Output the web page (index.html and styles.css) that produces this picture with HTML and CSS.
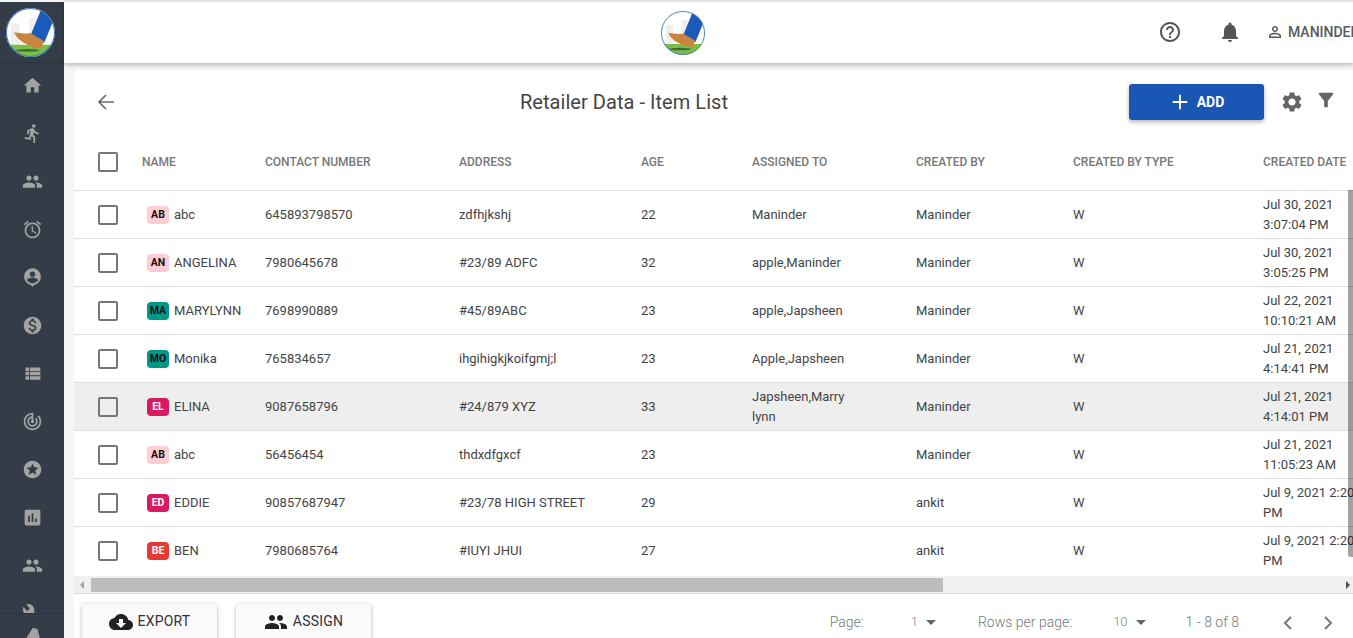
FILE: index.html
```html
<!DOCTYPE html>
<html lang="en">
<head>
<meta charset="utf-8">
<title>Retailer Data - Item List</title>
<link rel="stylesheet" href="styles.css">
</head>
<body>
<svg class="defs" width="0" height="0" aria-hidden="true">
  <defs>
    <clipPath id="logoclip"><circle cx="24" cy="24" r="24"/></clipPath>
    <symbol id="logo" viewBox="0 0 48 48">
      <g clip-path="url(#logoclip)">
        <rect width="48" height="48" fill="#fff"/>
        <rect x="5" y="15" width="8" height="21" fill="#efefef"/>
        <rect x="23" y="10" width="7" height="26" fill="#efefef"/>
        <rect x="0" y="36" width="48" height="12" fill="#7cbd4a"/>
        <ellipse cx="21" cy="41.500" rx="12" ry="1.300" fill="#3f6b2c"/>
        <path d="M35 0 L49 6 L37.500 34 L24 27 Z" fill="#1a5ab8"/>
        <path d="M8 24 C12 23.500 18 26 24 24.500 L37.500 32.500 L34 39.500 C24 38.500 11.500 33 8 24 Z" fill="#c9853f"/>
      </g>
      <circle cx="24" cy="24" r="23.500" fill="none" stroke="#3f77c4" stroke-width="1"/>
    </symbol>
    <symbol id="i-people" viewBox="0 0 24 24"><path d="M16 11c1.660 0 2.990-1.340 2.990-3S17.660 5 16 5c-1.660 0-3 1.340-3 3s1.340 3 3 3zm-8 0c1.660 0 2.990-1.340 2.990-3S9.660 5 8 5C6.340 5 5 6.340 5 8s1.340 3 3 3zm0 2c-2.330 0-7 1.170-7 3.500V19h14v-2.500c0-2.330-4.670-3.500-7-3.500zm8 0c-.290 0-.620.020-.970.050 1.160.840 1.970 1.970 1.970 3.450V19h6v-2.500c0-2.330-4.670-3.500-7-3.500z"/></symbol>
  </defs>
</svg>
<div class="app">
  <aside class="sidebar">
    <div class="side-logo"><svg class="logo-big"><use href="#logo"/></svg></div>
    <nav class="side-nav">
      <a class="side-item"><svg viewBox="0 0 24 24"><path d="M10 20v-6h4v6h5v-8h3L12 3 2 12h3v8z"/></svg></a>
      <a class="side-item"><svg viewBox="0 0 24 24"><path d="M13.490 5.480c1.100 0 2-.9 2-2s-.9-2-2-2-2 .9-2 2 .9 2 2 2zm-3.600 13.900l1-4.400 2.100 2v6h2v-7.500l-2.100-2 .6-3c1.300 1.500 3.300 2.500 5.500 2.500v-2c-1.900 0-3.500-1-4.300-2.400l-1-1.600c-.4-.6-1-1-1.700-1-.3 0-.5.1-.8.1l-5.200 2.200v4.700h2v-3.400l1.800-.7-1.600 8.100-4.900-1-.4 2 7 1.400z"/></svg></a>
      <a class="side-item"><svg viewBox="0 0 24 24"><use href="#i-people"/></svg></a>
      <a class="side-item"><svg viewBox="0 0 24 24"><path d="M22 5.720l-4.600-3.860-1.290 1.530 4.600 3.860L22 5.720zM7.880 3.390L6.600 1.860 2 5.710l1.290 1.530 4.590-3.850zM12.500 8H11v6l4.750 2.850.75-1.230-4-2.370V8zM12 4c-4.970 0-9 4.030-9 9s4.030 9 9 9 9-4.030 9-9-4.030-9-9-9zm0 16c-3.870 0-7-3.130-7-7s3.130-7 7-7 7 3.130 7 7-3.130 7-7 7z"/></svg></a>
      <a class="side-item"><svg viewBox="0 0 24 24"><path d="M12 1.500C6.750 1.500 2.500 5.750 2.500 11c0 4.500 3.100 8.250 7.300 9.250L12 22.500l2.200-2.250c4.200-1 7.300-4.750 7.300-9.250 0-5.250-4.250-9.500-9.500-9.500zm0 3.500c1.800 0 3.200 1.400 3.200 3.200s-1.400 3.200-3.200 3.200-3.200-1.400-3.200-3.200S10.200 5 12 5zm0 13.500c-2.600 0-4.900-1.300-6.300-3.300.03-2.100 4.200-3.200 6.300-3.200s6.270 1.100 6.300 3.200c-1.400 2-3.700 3.300-6.300 3.300z"/></svg></a>
      <a class="side-item"><svg viewBox="0 0 24 24"><path d="M12 2C6.480 2 2 6.480 2 12s4.480 10 10 10 10-4.480 10-10S17.520 2 12 2zm1.410 16.090V20h-2.670v-1.930c-1.710-.36-3.160-1.460-3.270-3.400h1.960c.1 1.050.82 1.870 2.650 1.870 1.960 0 2.400-.98 2.400-1.590 0-.83-.44-1.610-2.670-2.140-2.480-.6-4.180-1.620-4.180-3.670 0-1.720 1.390-2.840 3.110-3.210V4h2.670v1.950c1.860.45 2.790 1.860 2.850 3.390H14.300c-.05-1.110-.64-1.870-2.220-1.870-1.500 0-2.400.68-2.400 1.640 0 .84.65 1.390 2.670 1.910s4.180 1.390 4.180 3.910c-.01 1.830-1.380 2.830-3.120 3.160z"/></svg></a>
      <a class="side-item"><svg viewBox="0 0 24 24"><path d="M4 14h4v-4H4v4zm0 5h4v-4H4v4zM4 9h4V5H4v4zm5 5h12v-4H9v4zm0 5h12v-4H9v4zM9 5v4h12V5H9z"/></svg></a>
      <a class="side-item"><svg viewBox="0 0 24 24"><path d="M19.070 4.930l-1.410 1.410C19.100 7.790 20 9.790 20 12c0 4.420-3.580 8-8 8s-8-3.580-8-8c0-4.080 3.050-7.440 7-7.930v2.020C8.160 6.570 6 9.030 6 12c0 3.310 2.690 6 6 6s6-2.690 6-6c0-1.660-.67-3.160-1.760-4.240l-1.410 1.410C15.550 9.900 16 10.900 16 12c0 2.210-1.790 4-4 4s-4-1.790-4-4c0-1.860 1.280-3.410 3-3.860v2.140c-.6.35-1 .98-1 1.720 0 1.100.9 2 2 2s2-.9 2-2c0-.74-.4-1.380-1-1.720V2h-1C6.480 2 2 6.480 2 12s4.480 10 10 10 10-4.480 10-10c0-2.760-1.120-5.260-2.930-7.070z"/></svg></a>
      <a class="side-item"><svg viewBox="0 0 24 24"><path d="M11.990 2C6.470 2 2 6.480 2 12s4.470 10 9.990 10C17.520 22 22 17.520 22 12S17.520 2 11.990 2zm4.240 16L12 15.450 7.770 18l1.120-4.810-3.730-3.230 4.920-.42L12 5l1.920 4.530 4.920.42-3.730 3.230L16.230 18z"/></svg></a>
      <a class="side-item"><svg viewBox="0 0 24 24"><path d="M19 3H5c-1.100 0-2 .9-2 2v14c0 1.100.9 2 2 2h14c1.100 0 2-.9 2-2V5c0-1.100-.9-2-2-2zM9 17H7v-7h2v7zm4 0h-2V7h2v10zm4 0h-2v-4h2v4z"/></svg></a>
      <a class="side-item"><svg viewBox="0 0 24 24"><use href="#i-people"/></svg></a>
      <a class="side-item"><svg viewBox="0 0 24 24"><path d="M22.700 19l-9.100-9.100c.9-2.300.4-5-1.500-6.900-2-2-5-2.400-7.400-1.300L9 6 6 9 1.600 4.700C.4 7.100.9 10.100 2.900 12.100c1.900 1.900 4.600 2.400 6.900 1.500l9.100 9.100c.4.400 1 .4 1.400 0l2.300-2.300c.5-.4.5-1.100.1-1.400z"/></svg></a>
    </nav>
    <div class="side-foot"><svg viewBox="0 0 24 24"><path d="M13 2 L18.500 3.500 L21.500 15 L5 15 Z"/></svg></div>
  </aside>
  <div class="main">
    <header class="topbar">
      <svg class="logo-small"><use href="#logo"/></svg>
      <div class="top-actions">
        <svg class="top-ic help" viewBox="0 0 24 24"><path d="M11 18h2v-2h-2v2zm1-16C6.480 2 2 6.480 2 12s4.480 10 10 10 10-4.480 10-10S17.520 2 12 2zm0 18c-4.410 0-8-3.590-8-8s3.590-8 8-8 8 3.590 8 8-3.590 8-8 8zm0-14c-2.210 0-4 1.790-4 4h2c0-1.100.9-2 2-2s2 .9 2 2c0 2-3 1.750-3 5h2c0-2.250 3-2.500 3-5 0-2.210-1.790-4-4-4z"/></svg>
        <svg class="top-ic bell" viewBox="0 0 24 24"><path d="M12 22c1.100 0 2-.9 2-2h-4c0 1.100.89 2 2 2zm6-6v-5c0-3.070-1.640-5.640-4.500-6.320V4c0-.83-.67-1.500-1.500-1.500s-1.500.67-1.500 1.500v.68C7.630 5.360 6 7.920 6 11v5l-2 2v1h16v-1l-2-2z"/></svg>
        <svg class="top-ic user" viewBox="0 0 24 24"><path d="M12 5.900c1.160 0 2.100.94 2.100 2.100s-.94 2.100-2.100 2.100S9.900 9.160 9.900 8s.94-2.100 2.100-2.100m0 9c2.970 0 6.100 1.460 6.100 2.100v1.100H5.900V17c0-.64 3.130-2.100 6.100-2.100M12 4C9.790 4 8 5.790 8 8s1.790 4 4 4 4-1.790 4-4-1.790-4-4-4zm0 9c-2.670 0-8 1.340-8 4v3h16v-3c0-2.660-5.330-4-8-4z"/></svg>
        <span class="user-name">MANINDER</span>
      </div>
    </header>
    <section class="content">
      <div class="card">
        <div class="card-head">
          <svg class="back" viewBox="0 0 24 24"><path d="M20 12H5M12 5l-7 7 7 7" fill="none" stroke="#666" stroke-width="1.600"/></svg>
          <h1 class="title">Retailer Data - Item List</h1>
          <div class="head-actions">
            <button class="btn-add"><svg viewBox="0 0 24 24"><path d="M12 4v16M4 12h16" fill="none" stroke="#fff" stroke-width="2"/></svg>ADD</button>
            <svg class="gear" viewBox="0 0 24 24"><path d="M19.140 12.940c.04-.3.06-.61.06-.94 0-.32-.02-.64-.07-.94l2.030-1.580c.18-.14.23-.41.12-.61l-1.920-3.320c-.12-.22-.37-.29-.59-.22l-2.390.96c-.5-.38-1.030-.7-1.620-.94l-.36-2.540c-.04-.24-.24-.41-.48-.41h-3.840c-.24 0-.43.17-.47.41l-.36 2.540c-.59.24-1.130.57-1.620.94l-2.390-.96c-.22-.08-.47 0-.59.22L2.740 8.870c-.12.21-.08.47.12.61l2.030 1.580c-.05.3-.09.63-.09.94s.02.64.07.94l-2.030 1.580c-.18.14-.23.41-.12.61l1.920 3.320c.12.22.37.29.59.22l2.390-.96c.5.38 1.030.7 1.620.94l.36 2.540c.05.24.24.41.48.41h3.840c.24 0 .44-.17.47-.41l.36-2.540c.59-.24 1.130-.56 1.620-.94l2.390.96c.22.08.47 0 .59-.22l1.920-3.320c.12-.22.07-.47-.12-.61l-2.010-1.580zM12 15.600c-1.980 0-3.600-1.620-3.600-3.600s1.620-3.600 3.600-3.600 3.600 1.620 3.600 3.600-1.620 3.600-3.600 3.600z"/></svg>
            <svg class="funnel" viewBox="0 0 24 24"><path d="M4.250 5.610C6.270 8.200 10 13 10 13v6c0 .55.45 1 1 1h2c.55 0 1-.45 1-1v-6s3.720-4.800 5.740-7.390c.51-.66.04-1.610-.79-1.610H5.040c-.83 0-1.300.95-.79 1.610z"/></svg>
          </div>
        </div>
        <div class="table-wrap">
          <table class="grid">
            <colgroup>
              <col class="c-check"><col class="c-name"><col class="c-contact"><col class="c-address"><col class="c-age"><col class="c-assigned"><col class="c-created"><col class="c-type"><col class="c-date">
            </colgroup>
            <thead>
              <tr>
                <th><span class="cb"></span></th><th>NAME</th><th>CONTACT NUMBER</th><th>ADDRESS</th><th>AGE</th><th>ASSIGNED TO</th><th>CREATED BY</th><th>CREATED BY TYPE</th><th>CREATED DATE</th>
              </tr>
            </thead>
            <tbody>
              <tr><td><span class="cb"></span></td><td><span class="badge pink">AB</span>abc</td><td>645893798570</td><td>zdfhjkshj</td><td>22</td><td>Maninder</td><td>Maninder</td><td>W</td><td>Jul 30, 2021 3:07:04 PM</td></tr>
              <tr><td><span class="cb"></span></td><td><span class="badge pink">AN</span>ANGELINA</td><td>7980645678</td><td>#23/89 ADFC</td><td>32</td><td>apple,Maninder</td><td>Maninder</td><td>W</td><td>Jul 30, 2021 3:05:25 PM</td></tr>
              <tr><td><span class="cb"></span></td><td><span class="badge teal">MA</span>MARYLYNN</td><td>7698990889</td><td>#45/89ABC</td><td>23</td><td>apple,Japsheen</td><td>Maninder</td><td>W</td><td>Jul 22, 2021 10:10:21 AM</td></tr>
              <tr><td><span class="cb"></span></td><td><span class="badge teal">MO</span>Monika</td><td>765834657</td><td>ihgihigkjkoifgmj;l</td><td>23</td><td>Apple,Japsheen</td><td>Maninder</td><td>W</td><td>Jul 21, 2021 4:14:41 PM</td></tr>
              <tr class="hover"><td><span class="cb"></span></td><td><span class="badge crimson">EL</span>ELINA</td><td>9087658796</td><td>#24/879 XYZ</td><td>33</td><td>Japsheen,Marry lynn</td><td>Maninder</td><td>W</td><td>Jul 21, 2021 4:14:01 PM</td></tr>
              <tr><td><span class="cb"></span></td><td><span class="badge pink">AB</span>abc</td><td>56456454</td><td>thdxdfgxcf</td><td>23</td><td></td><td>Maninder</td><td>W</td><td>Jul 21, 2021 11:05:23 AM</td></tr>
              <tr><td><span class="cb"></span></td><td><span class="badge crimson">ED</span>EDDIE</td><td>90857687947</td><td>#23/78 HIGH STREET</td><td>29</td><td></td><td>ankit</td><td>W</td><td>Jul 9, 2021 2:20:11 PM</td></tr>
              <tr><td><span class="cb"></span></td><td><span class="badge red">BE</span>BEN</td><td>7980685764</td><td>#IUYI JHUI</td><td>27</td><td></td><td>ankit</td><td>W</td><td>Jul 9, 2021 2:20:05 PM</td></tr>
            </tbody>
          </table>
          <div class="vscroll"></div>
        </div>
        <div class="hscroll">
          <span class="arrow-l"></span>
          <div class="hthumb"></div>
          <span class="arrow-r"></span>
        </div>
        <div class="card-foot">
          <div class="foot-btns">
            <button class="btn-foot"><svg viewBox="0 0 24 24"><path d="M19.350 10.040C18.670 6.590 15.640 4 12 4 9.110 4 6.600 5.640 5.350 8.040 2.340 8.360 0 10.910 0 14c0 3.310 2.690 6 6 6h13c2.760 0 5-2.240 5-5 0-2.640-2.050-4.780-4.650-4.960zM17 13l-5 5-5-5h3V9h4v4h3z"/></svg>EXPORT</button>
            <button class="btn-foot"><svg viewBox="0 0 24 24"><use href="#i-people"/></svg>ASSIGN</button>
          </div>
          <div class="pager">
            <span class="pg-label">Page:</span>
            <span class="pg-sel pg-sel-page">1<i class="caret"></i></span>
            <span class="pg-label">Rows per page:</span>
            <span class="pg-sel pg-sel-rows">10<i class="caret"></i></span>
            <span class="pg-label pg-count">1 - 8 of 8</span>
            <svg class="chev" viewBox="0 0 24 24"><path d="M15 6l-6 6 6 6" fill="none" stroke="#777" stroke-width="2"/></svg>
            <svg class="chev" viewBox="0 0 24 24"><path d="M9 6l6 6-6 6" fill="none" stroke="#777" stroke-width="2"/></svg>
          </div>
        </div>
      </div>
    </section>
  </div>
</div>
</body>
</html>
```

FILE: styles.css
```css
* { box-sizing: border-box; }
html, body { margin: 0; height: 100%; overflow: hidden; }
body { font-family: Roboto, "Liberation Sans", sans-serif; font-size: 13px; color: #333; background: #f5f5f5; }
.defs { position: absolute; }
.app { display: flex; width: 1353px; height: 638px; overflow: hidden; }

.sidebar { width: 64px; flex: none; background: #343c47; display: flex; flex-direction: column; height: 638px; margin-top: 2px; }
.side-logo { height: 61px; flex: none; display: flex; align-items: flex-start; justify-content: center; border-bottom: 1px solid #2b323b; padding: 6px 3px 0 0; }
.logo-big { width: 49px; height: 49px; }
.side-nav { height: 552px; margin-top: -2px; flex: none; overflow: hidden; display: flex; flex-direction: column; }
.side-item { height: 48px; flex: none; display: flex; align-items: center; justify-content: center; }
.side-item svg { width: 21px; height: 21px; fill: #a3a3a3; }
.side-foot { flex: none; height: 40px; border-top: 1px solid #2b323b; display: flex; justify-content: center; padding-top: 12px; }
.side-foot svg { width: 20px; height: 20px; fill: #a3a3a3; }

.main { flex: 1; min-width: 0; display: flex; flex-direction: column; height: 638px; }
.topbar { height: 63px; flex: none; background: #fff; border-top: 2px solid #e4e4e4; box-shadow: 0 2px 4px rgba(0,0,0,.25); position: relative; z-index: 1; display: flex; align-items: center; justify-content: center; }
.logo-small { width: 44px; height: 44px; margin-left: -4px; margin-right: 48px; }
.top-actions { position: absolute; left: 1094px; top: 0; height: 60px; display: flex; align-items: center; white-space: nowrap; }
.top-ic { fill: #555; flex: none; }
.help { width: 24px; height: 24px; }
.bell { width: 24px; height: 24px; margin-left: 36px; }
.user { width: 18px; height: 18px; margin-left: 24px; }
.user-name { margin-left: 4px; font-size: 14px; font-weight: 500; color: #5a5a5a; }

.content { flex: 1; min-height: 0; padding: 7px 0 0 10px; }
.card { background: #fff; border-radius: 4px 0 0 0; height: 640px; display: flex; flex-direction: column; overflow: hidden; }
.card-head { height: 64px; flex: none; display: flex; align-items: center; position: relative; justify-content: center; padding-right: 179px; }
.back { width: 24px; height: 24px; position: absolute; left: 20px; top: 20px; }
.title { margin: 0; font-size: 20px; font-weight: 400; color: #444; letter-spacing: .05px; }
.head-actions { position: absolute; left: 1055px; top: 14px; display: flex; align-items: flex-start; }
.btn-add { width: 135px; height: 36px; border: 0; border-radius: 3px; background: #1a56b4; color: #fff; font: 700 14px Roboto, sans-serif; display: flex; align-items: center; justify-content: center; gap: 6px; box-shadow: 0 2px 4px rgba(0,0,0,.3); padding: 0; }
.btn-add svg { width: 22px; height: 22px; }
.gear { width: 24px; height: 24px; fill: #666; margin: 6px 0 0 16px; }
.funnel { width: 22px; height: 22px; fill: #666; margin: 5px 0 0 11px; }

.table-wrap { height: 442px; flex: none; overflow: hidden; position: relative; }
.grid { border-collapse: collapse; table-layout: fixed; width: 1460px; }
.c-check { width: 68px; }
.c-name { width: 123px; }
.c-contact { width: 194px; }
.c-address { width: 182px; }
.c-age { width: 111px; }
.c-assigned { width: 164px; }
.c-created { width: 157px; }
.c-type { width: 190px; }
.c-date { width: 271px; }
.grid th { height: 56px; text-align: left; font-size: 12px; font-weight: 500; color: #777; white-space: nowrap; padding: 0; }
.grid td { height: 48px; padding: 2px 1px 0 0; border-top: 1px solid #dedede; font-size: 13px; line-height: 20px; color: #444; vertical-align: middle; }
.grid th:last-child, .grid td:last-child { padding-right: 160px; }
.grid th:first-child { padding: 0 0 0 24px; }
.grid td:first-child { padding: 1px 0 0 24px; }
.grid tbody td:nth-child(2) { padding-left: 5px; }
.grid tbody td:nth-child(6) { padding-right: 56px; }
.grid tr.hover td { background: #eee; }
.cb { display: block; width: 20px; height: 20px; border: 2px solid #777; border-radius: 2px; }
.badge { display: inline-block; width: 22px; height: 18px; border-radius: 4px; margin-right: 5px; text-align: center; font-size: 10.500px; font-weight: 700; line-height: 18px; color: #111; vertical-align: middle; position: relative; top: -1px; }
.pink { background: #ffcdd2; }
.teal { background: #009688; }
.crimson { background: #d81b60; color: #fff; }
.red { background: #e53935; color: #fff; }
.vscroll { position: absolute; right: 0; top: 56px; width: 5px; height: 367px; background: rgba(0,0,0,.36); border-radius: 0 0 0 3px; }

.hscroll { height: 18px; flex: none; background: #f0f0f0; border-bottom: 1px solid #ddd; display: flex; align-items: center; position: relative; }
.arrow-l { width: 0; height: 0; border: 4px solid transparent; border-right: 4px solid #a3a3a3; border-left: 0; margin-left: 6px; }
.hthumb { width: 852px; height: 14px; background: #bdbdbd; margin-left: 7px; }
.arrow-r { width: 0; height: 0; border: 4px solid transparent; border-left: 4px solid #505050; border-right: 0; margin-left: auto; margin-right: 3px; }

.card-foot { flex: none; height: 60px; display: flex; justify-content: space-between; padding-left: 8px; }
.foot-btns { display: flex; gap: 19px; padding-top: 10px; }
.btn-foot { width: 135px; height: 60px; border: 0; border-radius: 3px; background: #fafafa; box-shadow: 0 1px 4px rgba(0,0,0,.3); color: #333; font: 400 14px/24px Roboto, sans-serif; letter-spacing: .2px; display: flex; align-items: flex-start; justify-content: center; gap: 5px; padding: 5px 0 0; }
.btn-foot svg { width: 24px; height: 24px; fill: #222; margin-top: 1px; }
.pager { display: flex; align-items: flex-start; padding-top: 18px; color: #888; font-size: 14px; font-weight: 300; line-height: 20px; }
.pg-label { color: #777; }
.pg-sel { color: #888; display: flex; align-items: center; font-size: 13px; }
.pg-sel-page { margin-left: 47px; margin-right: 42px; }
.pg-sel-rows { margin-left: 41px; margin-right: 40px; }
.caret { width: 0; height: 0; border: 5px solid transparent; border-top: 5px solid #666; border-bottom: 0; margin-left: 8px; }
.chev { width: 24px; height: 24px; margin-top: -1px; }
.pg-count { margin-right: 37px; }
.chev + .chev { margin-left: 16px; margin-right: 13px; }
```
